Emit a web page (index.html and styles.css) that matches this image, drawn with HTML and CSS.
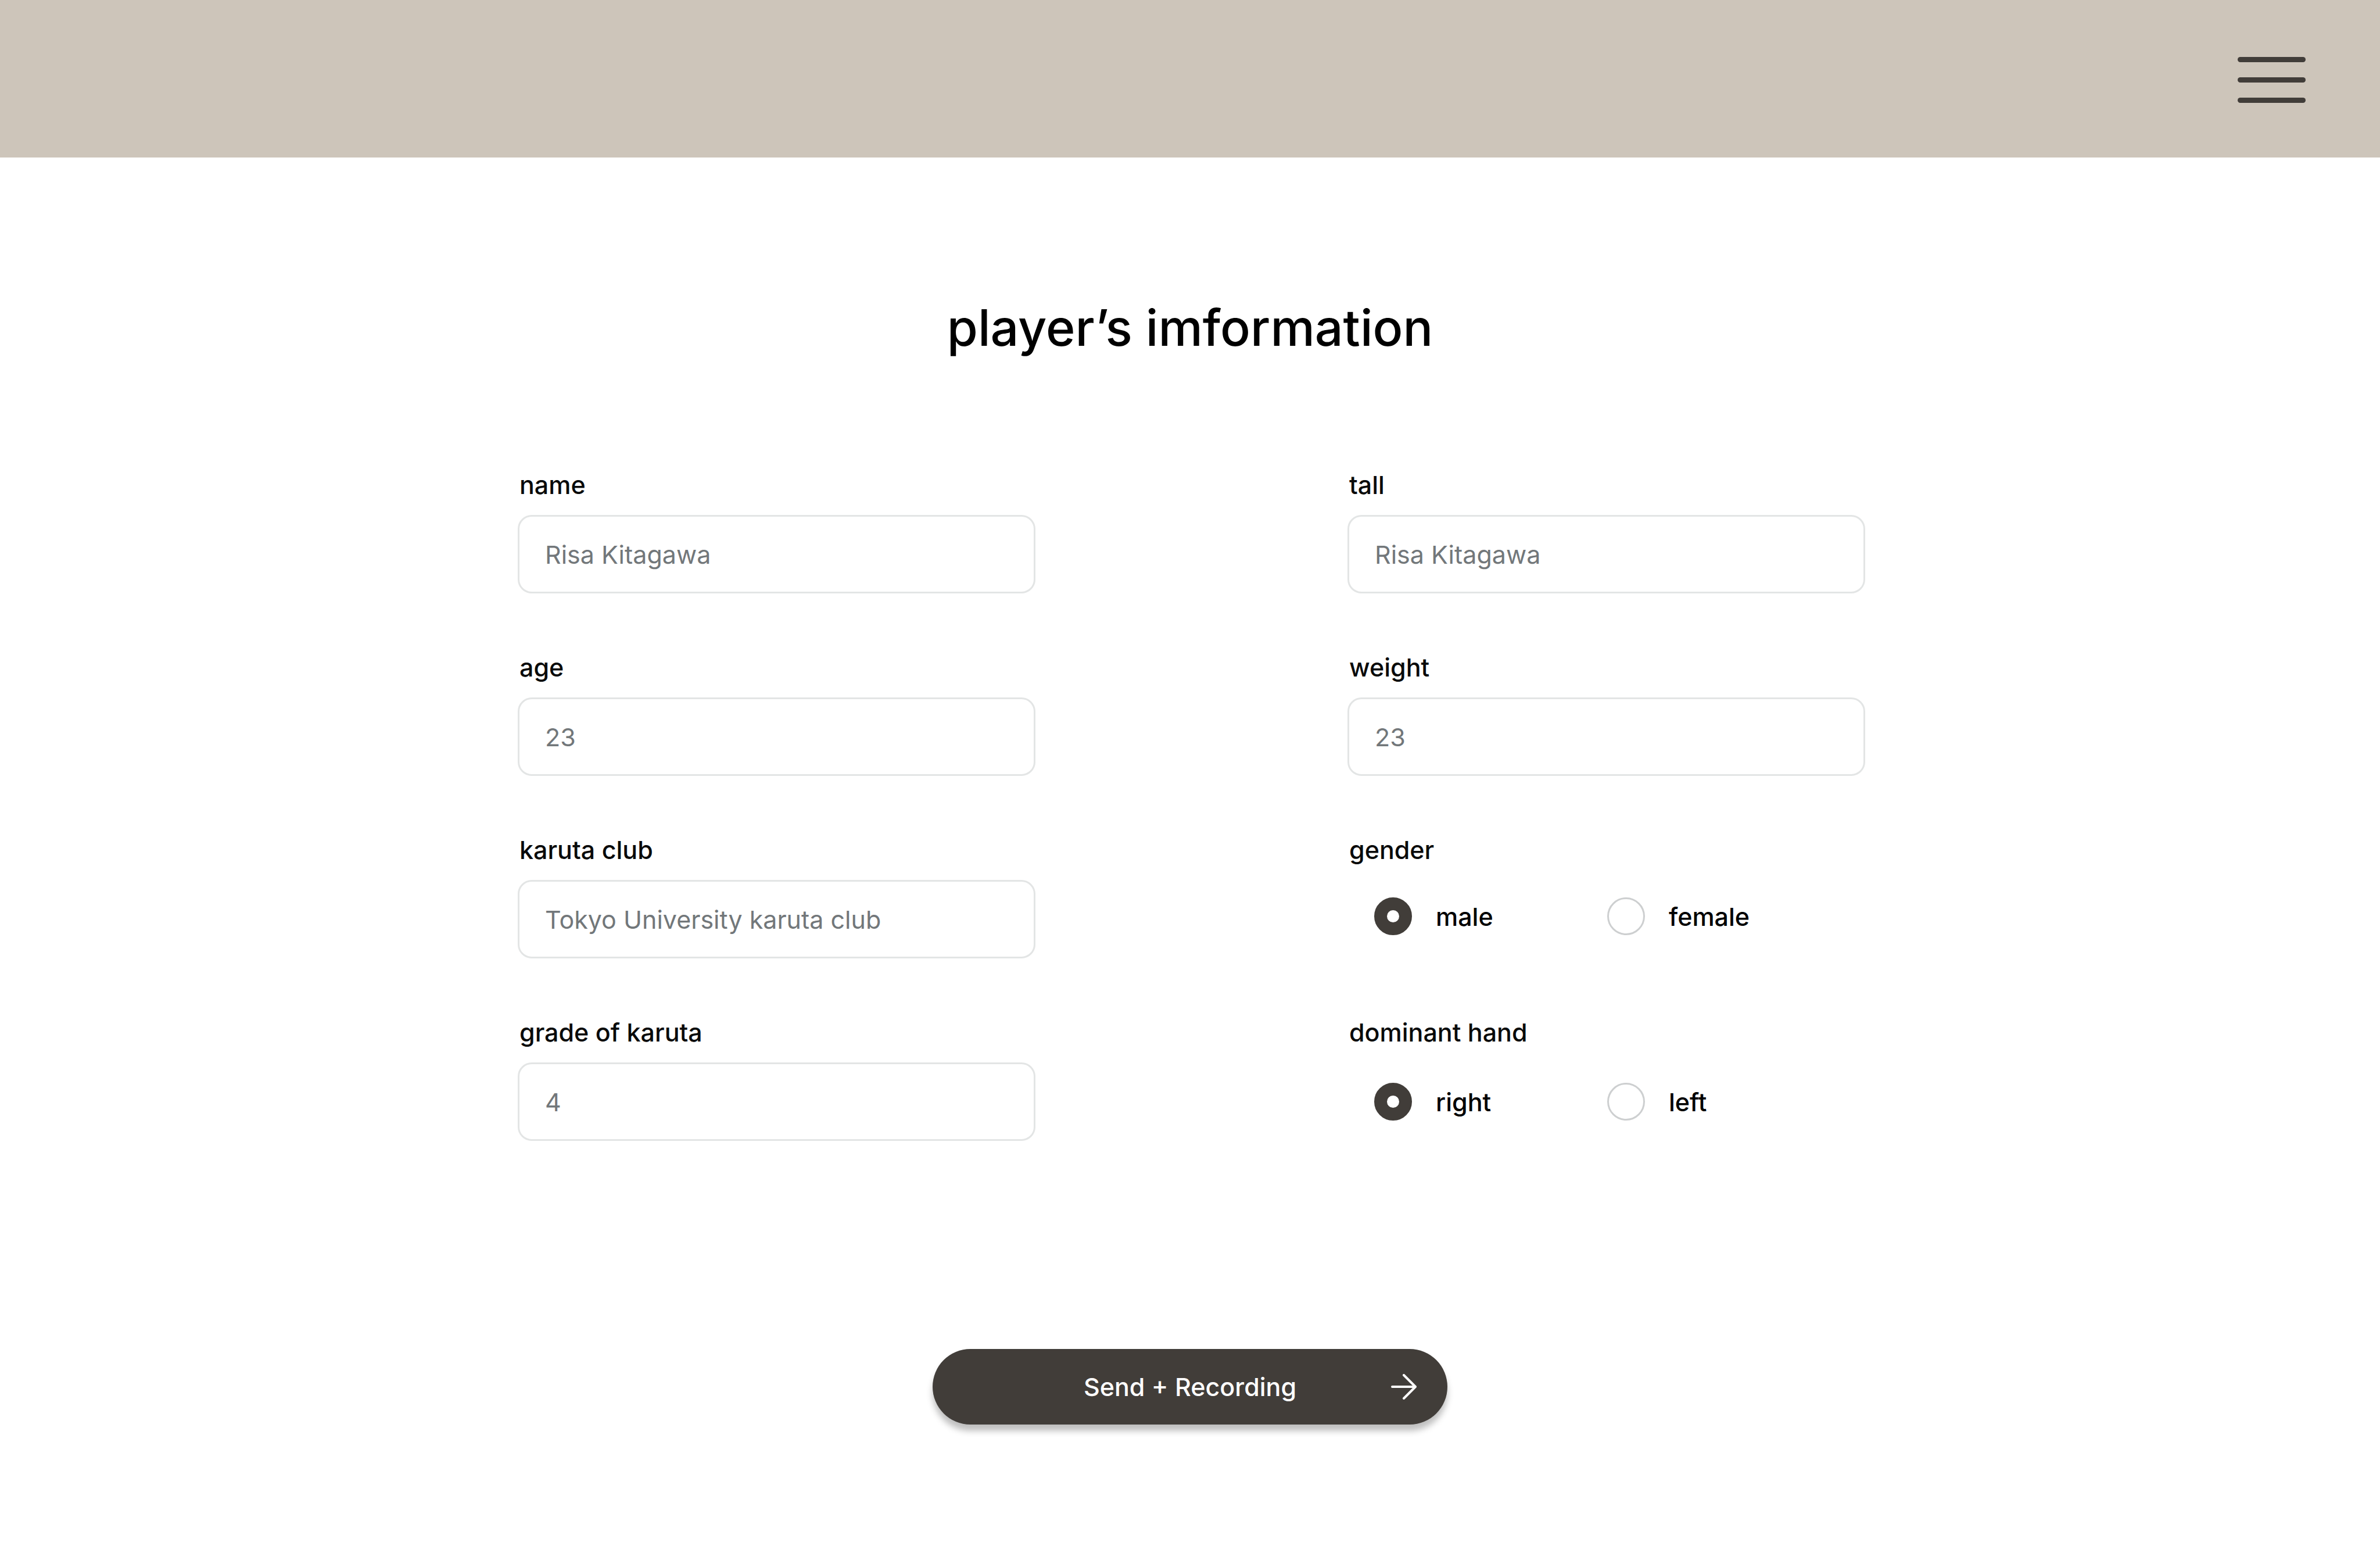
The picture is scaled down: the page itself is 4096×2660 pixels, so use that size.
FILE: index.html
```html
<!DOCTYPE html>
<html lang="en">
<head>
  <meta charset="utf-8">
  <meta name="viewport" content="width=device-width, initial-scale=1">
  <title>player’s imformation</title>
  <link rel="stylesheet" href="styles.css">
</head>
<body>
  <header class="header">
    <button class="menu" type="button" aria-label="Menu">
      <span class="menu__line"></span>
      <span class="menu__line"></span>
      <span class="menu__line"></span>
    </button>
  </header>

  <main class="page">
    <h1 class="page__title">player’s imformation</h1>

    <form class="form">
      <div class="form__grid">
        <div class="field">
          <label class="field__label" for="name">name</label>
          <input class="field__input" id="name" type="text" placeholder="Risa Kitagawa">
        </div>
        <div class="field">
          <label class="field__label" for="tall">tall</label>
          <input class="field__input" id="tall" type="text" placeholder="Risa Kitagawa">
        </div>
        <div class="field">
          <label class="field__label" for="age">age</label>
          <input class="field__input" id="age" type="text" placeholder="23">
        </div>
        <div class="field">
          <label class="field__label" for="weight">weight</label>
          <input class="field__input" id="weight" type="text" placeholder="23">
        </div>
        <div class="field">
          <label class="field__label" for="club">karuta club</label>
          <input class="field__input" id="club" type="text" placeholder="Tokyo University karuta club">
        </div>
        <div class="field" role="radiogroup" aria-labelledby="gender-label">
          <span class="field__label" id="gender-label">gender</span>
          <div class="choices choices--compact">
            <label class="choice"><input class="choice__radio" type="radio" name="gender" value="male" checked>male</label>
            <label class="choice"><input class="choice__radio" type="radio" name="gender" value="female">female</label>
          </div>
        </div>
        <div class="field">
          <label class="field__label" for="grade">grade of karuta</label>
          <input class="field__input" id="grade" type="text" placeholder="4">
        </div>
        <div class="field" role="radiogroup" aria-labelledby="hand-label">
          <span class="field__label" id="hand-label">dominant hand</span>
          <div class="choices">
            <label class="choice"><input class="choice__radio" type="radio" name="hand" value="right" checked>right</label>
            <label class="choice"><input class="choice__radio" type="radio" name="hand" value="left">left</label>
          </div>
        </div>
      </div>

      <button class="submit" type="submit">
        <span class="submit__text">Send + Recording</span>
        <svg class="submit__arrow" viewBox="0 0 44 44" fill="none" stroke="currentColor" stroke-width="4" stroke-linecap="round" stroke-linejoin="round" aria-hidden="true">
          <path d="M2 22H42M22 2L42 22L22 42"/>
        </svg>
      </button>
    </form>
  </main>
</body>
</html>
```

FILE: styles.css
```css
* {
  box-sizing: border-box;
}

body {
  margin: 0;
  background: #fff;
  color: #000;
  font-family: Inter, "Liberation Sans", sans-serif;
  font-size: 43px;
  font-weight: 500;
  line-height: 52px;
}

button,
input {
  font: inherit;
}

.header {
  display: flex;
  justify-content: flex-end;
  padding: 98px 128px 94px;
  background: #cdc5ba;
}

.menu {
  display: flex;
  flex-direction: column;
  justify-content: center;
  gap: 26px;
  width: 117px;
  padding: 0;
  border: 0;
  background: none;
}

.menu__line {
  height: 9px;
  border-radius: 5px;
  background: #413d39;
}

.page {
  padding: 241px 0 208px;
}

.page__title {
  margin: 0 0 191px;
  font-size: 86px;
  font-weight: 500;
  line-height: 105px;
  text-align: center;
}

.form {
  display: flex;
  flex-direction: column;
  align-items: center;
  gap: 358px;
}

.form__grid {
  display: grid;
  grid-template-columns: repeat(2, minmax(0, 891px));
  justify-content: center;
  gap: 101px 537px;
  width: 100%;
  padding-left: 5px;
}

.field {
  display: flex;
  flex-direction: column;
  gap: 26px;
}

.field__label {
  padding-left: 3px;
  color: #090a0a;
}

.field__input {
  width: 100%;
  height: 135px;
  padding: 0 44px;
  border: 3px solid #e3e5e5;
  border-radius: 24px;
  background: #fff;
  color: #090a0a;
  font-weight: 400;
}

.field__input::placeholder {
  color: #72777a;
  opacity: 1;
}

.choices {
  display: grid;
  grid-template-columns: repeat(2, 401px);
  align-items: center;
  height: 135px;
  padding-left: 46px;
}

.choices--compact {
  height: 125px;
}

.choice {
  display: flex;
  align-items: center;
  gap: 41px;
}

.choice__radio {
  appearance: none;
  width: 65px;
  height: 65px;
  margin: 0;
  border: 3px solid #cdcfd0;
  border-radius: 50%;
  background: #fff;
}

.choice__radio:checked {
  border: 22px solid #413d39;
}

.submit {
  display: grid;
  grid-template-columns: 44px 1fr 44px;
  align-items: center;
  width: 886px;
  height: 130px;
  padding: 0 53px;
  border: 0;
  border-radius: 65px;
  background: #413d39;
  box-shadow: 0 11px 11px rgba(0, 0, 0, 0.25);
  color: #fff;
}

.submit__text {
  grid-column: 2;
}

.submit__arrow {
  width: 44px;
  height: 44px;
}
```
